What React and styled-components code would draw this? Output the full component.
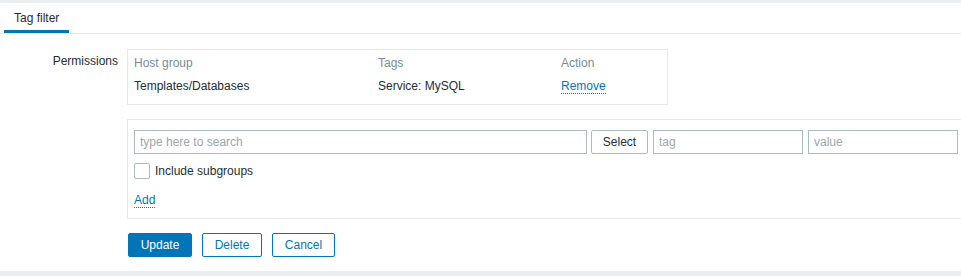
import React from "react";
import styled, { createGlobalStyle } from "styled-components";

const Global = createGlobalStyle`
  html, body { margin: 0; padding: 0; overflow: hidden; background: #ebeef0; }
  body { font-family: "Liberation Sans", Arial, sans-serif; font-size: 12px; color: #1f2c33; }
  * { box-sizing: border-box; }
`;

const Page = styled.div`
  padding-top: 3px;
  width: 961px;
  height: 276px;
`;

const Panel = styled.div`
  background: #fff;
  height: 268px;
  overflow: hidden;
`;

const TabBar = styled.div`
  display: flex;
  padding-left: 4px;
  height: 31px;
  border-bottom: 1px solid #e6e9eb;
`;

const Tab = styled.div`
  padding: 3px 10px 0;
  height: 30px;
  border-bottom: 3px solid ${p => (p.$active ? "#0275b8" : "transparent")};
  color: #1f2c33;
  display: flex;
  align-items: center;
`;

const Form = styled.div`
  padding-top: 15px;
  display: grid;
  grid-template-columns: 118px 1fr;
  column-gap: 9px;
  row-gap: 14px;
`;

const Label = styled.div`
  text-align: right;
  line-height: 24px;
`;

const Field = styled.div`
  min-width: 0;
`;

const Box = styled.div`
  border: 1px solid #e6e9eb;
  width: ${p => p.$width}px;
  padding: ${p => p.$pad};
`;

const Table = styled.div`
  display: grid;
  grid-template-columns: 244px 183px 1fr;
  padding-left: 6px;
  padding-bottom: 7px;
`;

const Th = styled.div`
  color: #768d99;
  height: 24px;
  line-height: 26px;
`;

const Td = styled.div`
  height: 23px;
  line-height: 24px;
`;

const Link = styled.span`
  color: #0275b8;
  border-bottom: 1px dotted #0275b8;
  line-height: 14px;
  cursor: pointer;
`;

const Row = styled.div`
  display: flex;
  align-items: center;
  gap: ${p => p.$gap || 0}px;
  padding-left: ${p => p.$pl || 0}px;
`;

const AddRow = styled.div`
  height: 39px;
  padding-top: 3px;
  display: flex;
  align-items: center;
`;

const CheckRow = styled.label`
  display: flex;
  align-items: center;
  gap: 5px;
  height: 16px;
  margin-top: 9px;
`;

const Input = styled.input`
  width: ${p => p.$w}px;
  height: 24px;
  margin-left: ${p => p.$ml || 0}px;
  border: 1px solid #acbbc2;
  padding: 0 5px;
  font-family: inherit;
  font-size: 12px;
  color: #1f2c33;
  outline: none;
  &::placeholder { color: #9aa7ae; }
`;

const Button = styled.button`
  height: 24px;
  width: ${p => p.$w}px;
  margin-left: ${p => p.$ml || 0}px;
  padding: 0;
  font-family: inherit;
  font-size: 12px;
  border-radius: 2px;
  cursor: pointer;
  border: 1px solid ${p => (p.$variant === "gray" ? "#acbbc2" : "#0275b8")};
  background: ${p => (p.$variant === "primary" ? "#0275b8" : "#fff")};
  color: ${p => (p.$variant === "primary" ? "#fff" : p.$variant === "gray" ? "#1f2c33" : "#0275b8")};
`;

const Check = styled.span`
  width: 16px;
  height: 16px;
  border: 1px solid #acbbc2;
  border-radius: 2px;
  display: inline-block;
  background: #fff;
`;

const Stack = styled.div`
  display: flex;
  flex-direction: column;
  align-items: flex-start;
`;

export default function App() {
  return (
    <Page>
      <Global />
      <Panel>
        <TabBar>
          <Tab $active>Tag filter</Tab>
        </TabBar>
        <Form>
          <Label>Permissions</Label>
          <Field>
            <Box $width={541} $pad="0">
              <Table>
                <Th>Host group</Th>
                <Th>Tags</Th>
                <Th>Action</Th>
                <Td>Templates/Databases</Td>
                <Td>Service: MySQL</Td>
                <Td><Link>Remove</Link></Td>
              </Table>
            </Box>
          </Field>
          <div />
          <Field>
            <Box $width={860} $pad="10px 6px 0 6px">
              <Stack>
                <Row>
                  <Input $w={453} placeholder="type here to search" />
                  <Button $variant="gray" $w={57} $ml={4}>Select</Button>
                  <Input $w={150} $ml={5} placeholder="tag" />
                  <Input $w={150} $ml={5} placeholder="value" />
                </Row>
                <CheckRow>
                  <Check />
                  <span>Include subgroups</span>
                </CheckRow>
                <AddRow>
                  <Link>Add</Link>
                </AddRow>
              </Stack>
            </Box>
          </Field>
          <div />
          <Row $gap={10} $pl={1}>
            <Button $variant="primary" $w={64}>Update</Button>
            <Button $w={60}>Delete</Button>
            <Button $w={63}>Cancel</Button>
          </Row>
        </Form>
      </Panel>
    </Page>
  );
}
